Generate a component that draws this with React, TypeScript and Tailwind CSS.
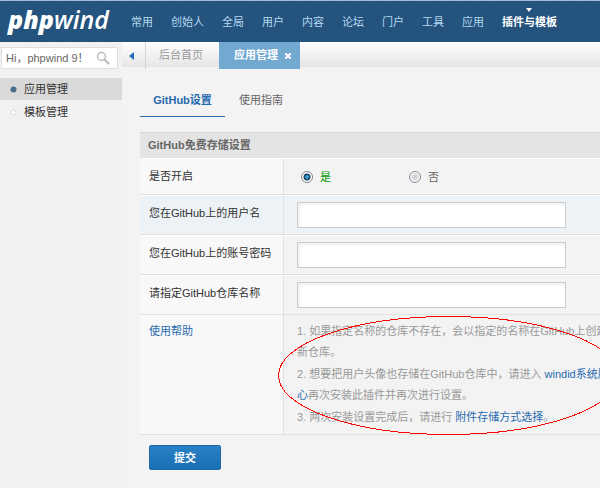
import { type ReactNode } from "react";

const navItems = ["常用", "创始人", "全局", "用户", "内容", "论坛", "门户", "工具", "应用"];

function Row({
  label,
  htmlFor,
  tint = false,
  children,
}: {
  label: string;
  htmlFor?: string;
  tint?: boolean;
  children: ReactNode;
}) {
  return (
    <div
      className={
        "flex border-t border-t-white border-b border-b-[#e1e1e1] " + (tint ? "bg-[#ecf2f5]" : "")
      }
    >
      <div
        className={
          "w-36 shrink-0 border-r border-r-[#e1e1e1] py-2 pl-[9px] leading-[18px] " +
          (tint ? "" : "bg-[#f8f8f8]")
        }
      >
        <label htmlFor={htmlFor}>{label}</label>
      </div>
      <div className="flex flex-1 items-center pl-[13px]">{children}</div>
    </div>
  );
}

function TextField({ id, type = "text" }: { id: string; type?: string }) {
  return (
    <input
      id={id}
      type={type}
      className="my-[6px] h-[26px] w-[269px] border border-[#cccccc] bg-white px-1 shadow-[inset_2px_2px_3px_#f0f0f0] outline-none"
    />
  );
}

function Radio({ label, on = false }: { label: string; on?: boolean }) {
  return (
    <label
      className={"flex w-[108px] items-center gap-[7px] pl-1 " + (on ? "text-[#009900]" : "text-[#666666]")}
    >
      <input
        type="radio"
        name="enabled"
        defaultChecked={on}
        className="h-3 w-3 appearance-none rounded-full border border-[#8a8a8a] bg-[radial-gradient(circle,#c4ccd3_0,#dde1e5_3px,#ffffff_5px)] checked:border-[#7b868e] checked:bg-[radial-gradient(circle,#5fc0ea_0,#1b6fa3_2px,#12324d_3px,#ffffff_4px)]"
      />
      {label}
    </label>
  );
}

export default function App() {
  return (
    <div className="flex min-h-screen flex-col overflow-hidden bg-[#f3f3f3] font-['Liberation_Sans','Noto_Sans_CJK_SC',sans-serif] text-[11px] leading-[18px] text-[#333333]">
      <header className="flex h-[42px] shrink-0 border-t border-[#a9b6dc] bg-[#23527c] bg-[repeating-linear-gradient(135deg,#23527c_0,#23527c_2px,#265580_2px,#265580_3px)]">
        <a
          href="#home"
          className="w-[131px] shrink-0 pl-2 font-['Open_Sans',sans-serif] text-[25px] leading-[36px] text-white italic"
        >
          <span className="font-extrabold">php</span>
          <span className="font-semibold">wind</span>
        </a>
        <nav className="flex gap-[18px] pt-3 whitespace-nowrap text-[#b5d8f0]">
          {navItems.map((item) => (
            <a key={item} href="#nav">
              {item}
            </a>
          ))}
          <a href="#plugins" className="relative font-bold text-white">
            <svg className="absolute -top-[5px] left-6" width="6" height="4" viewBox="0 0 6 4">
              <path d="M0 0h6L3 4z" fill="#fff" />
            </svg>
            插件与模板
          </a>
        </nav>
      </header>

      <div className="flex flex-1">
        <aside className="w-[122px] shrink-0 bg-[#f1f1f1] pt-[5px]">
          <div className="mr-1 ml-px flex h-[22px] items-center border border-[#dfdfdf] bg-white pr-[7px] pl-1">
            <input
              aria-label="搜索"
              defaultValue="Hi，phpwind 9！"
              className="min-w-0 flex-1 bg-transparent text-[#666666] outline-none"
            />
            <button type="button" aria-label="搜索">
              <svg width="14" height="14" viewBox="0 0 14 14" fill="none" stroke="#bdbdbd">
                <circle cx="5.5" cy="5.5" r="4" strokeWidth="1.5" />
                <path d="M8.5 8.5l4 4" strokeWidth="2.4" strokeLinecap="round" />
              </svg>
            </button>
          </div>
          <nav className="mt-[9px]">
            <a href="#apps" className="flex h-[22px] items-center gap-[7px] bg-[#d9d9d9] pl-[10px]">
              <svg width="7" height="7" viewBox="0 0 7 7">
                <circle cx="3.5" cy="3.5" r="3" fill="#4b6c89" />
              </svg>
              应用管理
            </a>
            <a href="#templates" className="flex h-6 items-center gap-[7px] pl-[10px]">
              <svg width="7" height="7" viewBox="0 0 7 7">
                <circle cx="3.5" cy="3.5" r="2.5" fill="#fff" stroke="#d6d6d6" />
              </svg>
              模板管理
            </a>
          </nav>
        </aside>

        <main className="min-w-0 flex-1">
          <div className="flex h-[27px] items-start bg-[linear-gradient(#ffffff,#e5e5e5_25px,#f3f3f3_25px)] leading-[27px]">
            <button
              type="button"
              aria-label="后退"
              className="flex h-[27px] w-6 items-center border-r border-[#d5d5d5] pl-[7px]"
            >
              <svg width="5" height="8" viewBox="0 0 5 8">
                <path d="M5 0v8L0 4z" fill="#1f6dbb" />
              </svg>
            </button>
            <a href="#home" className="w-[73px] pl-[13px] text-[#999999]">
              后台首页
            </a>
            <div className="flex w-[81px] items-center gap-[7px] bg-[#73a8d1] pl-[15px] font-bold text-white">
              应用管理
              <button type="button" aria-label="关闭">
                <svg width="6" height="6" viewBox="0 0 6 6" stroke="#fff" strokeWidth="2">
                  <path d="M0 0l6 6M6 0L0 6" />
                </svg>
              </button>
            </div>
          </div>

          <div className="pl-[18px]">
            <nav className="mt-4 flex leading-[31px]">
              <a
                href="#settings"
                className="w-[85px] border-b border-[#266aae] text-center font-bold text-[#266aae]"
              >
                GitHub设置
              </a>
              <a href="#guide" className="pl-[14px] text-[#666666]">
                使用指南
              </a>
            </nav>

            <form onSubmit={(event) => event.preventDefault()}>
              <div className="relative mt-[15px]">
                <h2 className="border-t border-[#d9d9d9] bg-[#e4e4e4] pl-2 leading-[25px] font-bold text-[#666666]">
                  GitHub免费存储设置
                </h2>
                <Row label="是否开启">
                  <div className="flex h-[35px] items-center">
                    <Radio label="是" on />
                    <Radio label="否" />
                  </div>
                </Row>
                <Row label="您在GitHub上的用户名" htmlFor="user" tint>
                  <TextField id="user" />
                </Row>
                <Row label="您在GitHub上的账号密码" htmlFor="pass">
                  <TextField id="pass" type="password" />
                </Row>
                <Row label="请指定GitHub仓库名称" htmlFor="repo">
                  <TextField id="repo" />
                </Row>
                <div className="flex border-b border-[#e1e1e1] leading-[21px]">
                  <div className="w-36 shrink-0 border-r border-[#e1e1e1] bg-[#f8f8f8] py-[6px] pl-[9px]">
                    <a href="#help" className="text-[#266aae]">
                      使用帮助
                    </a>
                  </div>
                  <div className="flex flex-col gap-px py-[6px] pl-[13px] whitespace-nowrap text-[#999999]">
                    <p>
                      1. 如果指定名称的仓库不存在，会以指定的名称在GitHub上创建
                      <br />
                      新仓库。
                    </p>
                    <p>
                      2. 想要把用户头像也存储在GitHub仓库中，请进入{" "}
                      <a href="#windid" className="text-[#266aae]">
                        windid系统服务中
                        <br />心
                      </a>
                      再次安装此插件并再次进行设置。
                    </p>
                    <p>
                      3. 两次安装设置完成后，请进行{" "}
                      <a href="#storage" className="text-[#266aae]">
                        附件存储方式选择
                      </a>
                      。
                    </p>
                  </div>
                </div>
                <svg
                  className="pointer-events-none absolute bottom-0 left-[138px]"
                  width="341"
                  height="119"
                  viewBox="0 0 341 119"
                  shapeRendering="crispEdges"
                >
                  <ellipse cx="170.5" cy="59.5" rx="170" ry="59" fill="none" stroke="#f00" />
                </svg>
              </div>
              <button
                type="submit"
                className="mt-[10px] ml-[9px] h-[25px] w-[72px] rounded-xs border border-[#1a68a8] bg-linear-to-b from-[#2a80c6] to-[#196fb2] font-bold text-white"
              >
                提交
              </button>
            </form>
          </div>
        </main>
      </div>
    </div>
  );
}
